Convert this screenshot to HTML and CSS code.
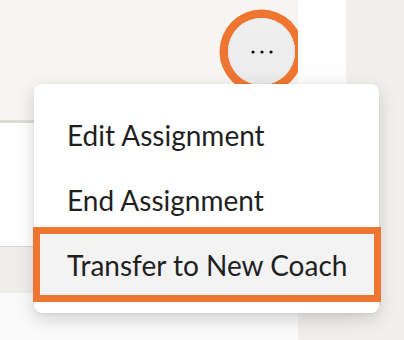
FILE: index.html
```html
<!DOCTYPE html>
<html>
<head>
<meta charset="utf-8">
<link rel="stylesheet" href="styles.css">
</head>
<body>
<div class="page">
  <div class="left">
    <div class="card-top">
      <button class="more-btn" aria-label="More actions">
        <svg width="22" height="4" viewBox="0 0 22 4"><circle cx="2" cy="2" r="1.6" fill="#111"/><circle cx="11" cy="2" r="1.6" fill="#111"/><circle cx="20" cy="2" r="1.6" fill="#111"/></svg>
      </button>
    </div>
    <div class="card-body"></div>
    <div class="card-foot"></div>
    <div class="card-next"></div>
  </div>
  <div class="strip"></div>
  <div class="side"></div>

  <ul class="menu">
    <li class="menu-item">Edit Assignment</li>
    <li class="menu-item">End Assignment</li>
    <li class="menu-item is-active">Transfer to New Coach</li>
  </ul>
</div>
</body>
</html>
```
FILE: styles.css
```css
* { box-sizing: border-box; }
html, body { margin: 0; padding: 0; }
body {
  width: 404px;
  height: 340px;
  overflow: hidden;
  font-family: "Lato", "Liberation Sans", sans-serif;
  background: #f0efec;
}
.page {
  position: relative;
  display: grid;
  grid-template-columns: 298px 48px 1fr;
  height: 340px;
}
.left {
  display: flex;
  flex-direction: column;
}
.card-top {
  height: 123px;
  background: #f6f5f2;
  border-bottom: 3px solid #dddcd9;
  display: flex;
  justify-content: flex-end;
  align-items: flex-start;
  padding: 18px 3px 0 0;
}
.more-btn {
  width: 67px;
  height: 67px;
  border-radius: 50%;
  border: none;
  background: linear-gradient(#f0f0f0, #ebebeb);
  box-shadow: 0 0 0 8.5px #ef7631, inset 0 0 0 1px #e4e4e4;
  display: flex;
  align-items: center;
  justify-content: center;
  padding: 0;
}
.card-body {
  height: 124px;
  background: linear-gradient(90deg, #ffffff 0, #ffffff 60%, #f4f4f4 100%);
  border-bottom: 1px solid #d9d8d5;
}
.card-foot {
  height: 46px;
  background: #efeeeb;
}
.card-next {
  flex: 1;
  background: #fafafa;
}
.strip {
  background: linear-gradient(#ffffff 0, #ffffff 55%, #f6f6f6 100%);
  height: 110px;
  box-shadow: 2px 0 4px rgba(0,0,0,0.08);
}
.side {
  background: #f1f0ed;
}
.menu {
  position: absolute;
  left: 34px;
  top: 84px;
  width: 345px;
  height: 229px;
  margin: 0;
  padding: 20px 5px 0 6px;
  list-style: none;
  background: #ffffff;
  border-radius: 8px;
  box-shadow: 0 6px 18px rgba(0,0,0,0.16), 0 1px 3px rgba(0,0,0,0.06);
  display: flex;
  flex-direction: column;
  gap: 4px;
}
.menu-item {
  height: 61px;
  display: flex;
  align-items: center;
  padding-left: 27px;
  font-size: 28px;
  color: #1f1f1f;
  letter-spacing: 0;
}
.menu-item.is-active {
  background: #f3f3f3;
  outline: 7px solid #ef7631;
}
```
